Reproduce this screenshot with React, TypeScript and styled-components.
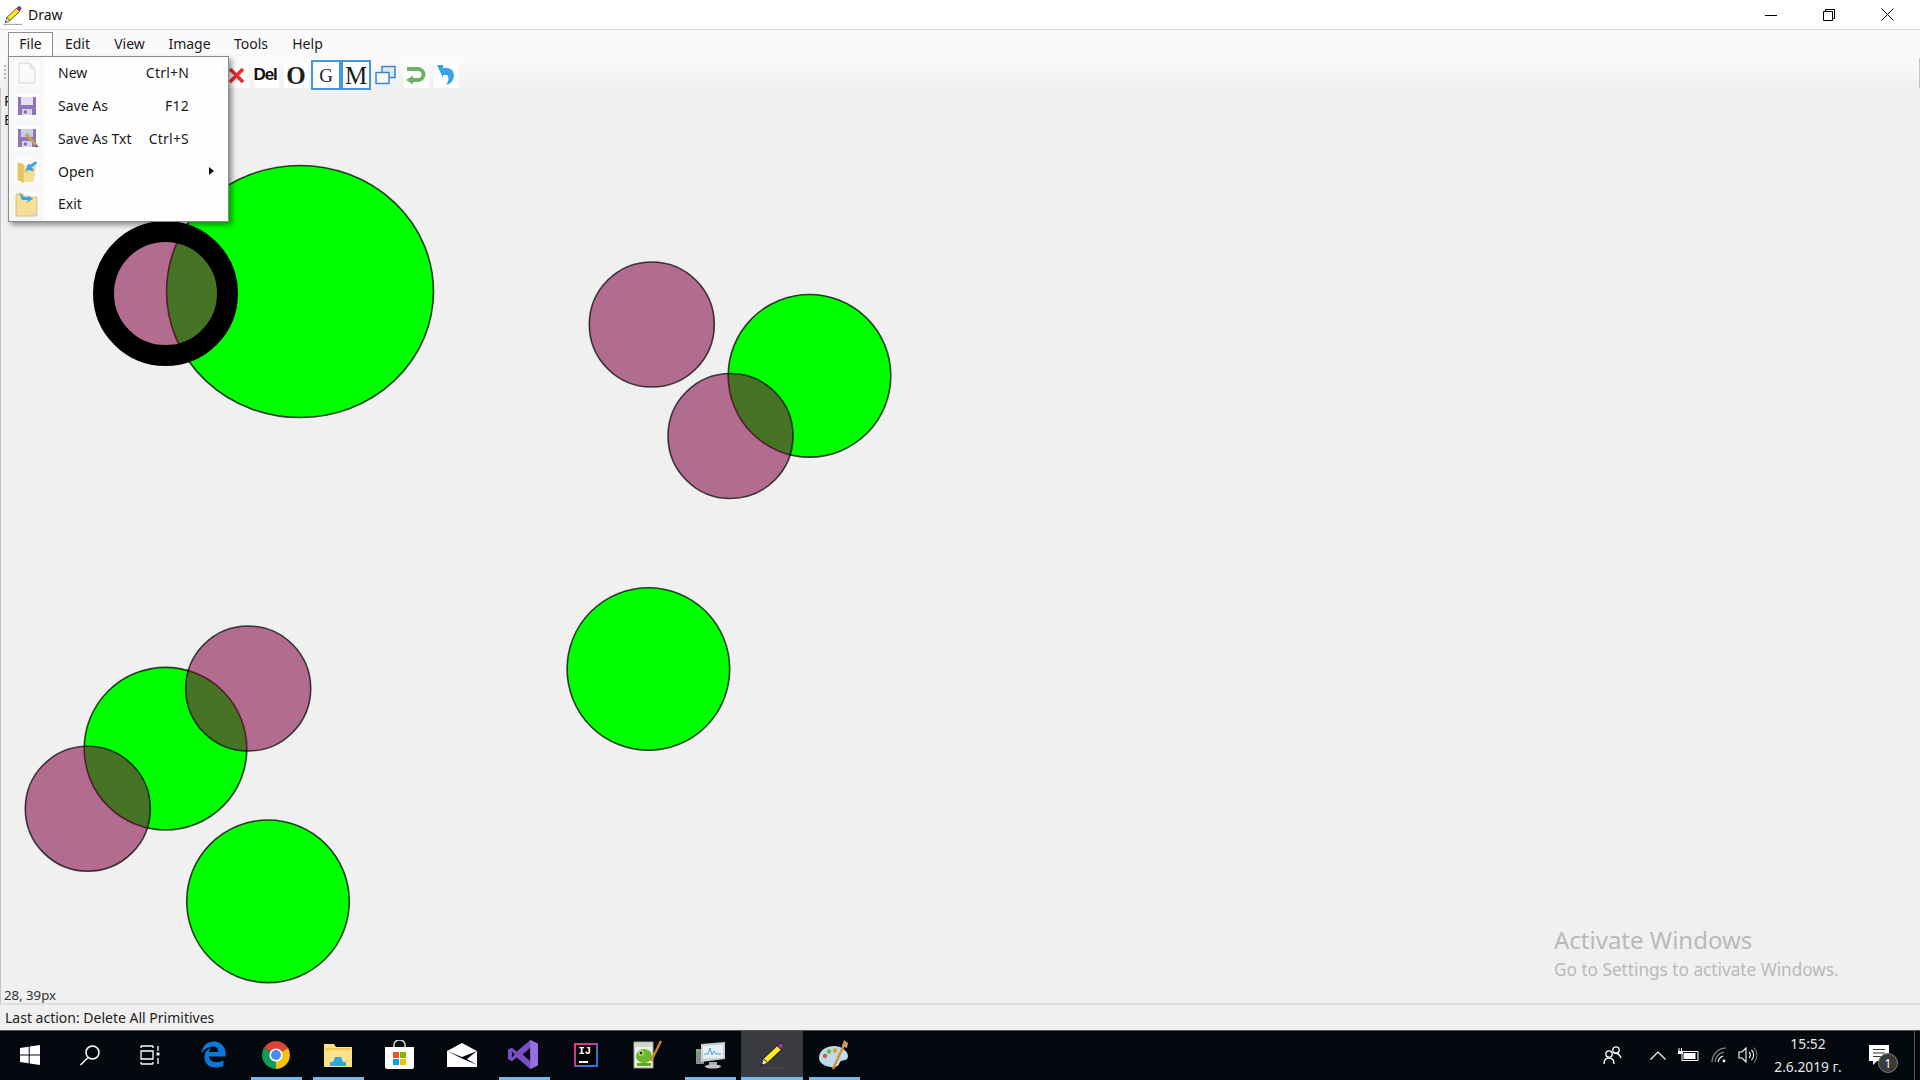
import React from "react";
import styled, { createGlobalStyle } from "styled-components";
import { FaEdgeLegacy } from "react-icons/fa";

const Global = createGlobalStyle`
  html, body { margin: 0; width: 1920px; height: 1080px; overflow: hidden; background: #f0f0f0; }
  body { font-family: "Noto Sans", "Open Sans", sans-serif; color: #1a1a1a; }
  * { box-sizing: border-box; }
`;

const Window = styled.div`display:flex;flex-direction:column;width:1920px;height:1080px;position:relative;`;
const TitleBar = styled.div`height:30px;flex:none;background:#fff;border-bottom:1px solid #dcdcdc;display:flex;align-items:center;padding-left:3px;`;
const TitleText = styled.span`font-size:14px;margin-left:5px;color:#111;`;
const Controls = styled.div`margin-left:auto;display:flex;padding-right:3px;`;
const ControlButton = styled.div`width:58.5px;height:29px;display:flex;align-items:center;justify-content:center;`;

const MenuBar = styled.div`height:28px;flex:none;background:#fafafa;display:flex;padding-left:8px;position:relative;z-index:3;`;
const MenuItem = styled.div<{ $open?: boolean; $w: number }>`
  width:${p => p.$w}px;height:${p => (p.$open ? 25 : 28)}px;margin-top:${p => (p.$open ? 2 : 0)}px;
  display:flex;align-items:center;justify-content:center;font-size:14px;padding-bottom:${p => (p.$open ? 3 : 1)}px;
  ${p => p.$open && "border:1px solid #8f8f8f;border-bottom:0;background:#fdfdfd;"}
`;
const Dropdown = styled.div`
  position:absolute;left:8px;top:26px;width:221px;height:166px;background:#fefefe;border:1px solid #8a8a8a;
  box-shadow:3px 3px 5px rgba(0,0,0,.4);display:grid;grid-auto-rows:32.75px;align-content:start;
  background-image:linear-gradient(to right,#f7f7f7 35px,transparent 35px);
`;
const Row = styled.div`display:flex;align-items:center;font-size:14px;position:relative;padding-bottom:1px;`;
const IconTile = styled.div`width:24px;height:24px;margin-left:6px;background:#fdfdfd;display:flex;align-items:center;justify-content:center;flex:none;`;
const RowLabel = styled.span`margin-left:19px;`;
const Shortcut = styled.span`position:absolute;right:39px;letter-spacing:.2px;`;
const Arrow = styled.span`position:absolute;right:14px;width:0;height:0;border-left:5px solid #111;border-top:4.5px solid transparent;border-bottom:4.5px solid transparent;`;

const Toolbar = styled.div`height:30px;flex:none;background:linear-gradient(#fbfbfb,#f0f0f0);display:flex;padding-left:221px;position:relative;z-index:2;border-right:1px solid #c4c4c4;`;
const Gripper = styled.div`position:absolute;left:3px;top:6px;width:4px;height:16px;background-image:radial-gradient(circle,#b8b8b8 1px,transparent 1.2px);background-size:4px 4px;`;
const ToolButton = styled.div<{ $checked?: boolean }>`
  width:30px;height:30px;margin-top:2px;display:flex;align-items:center;justify-content:center;
  ${p => p.$checked && "border:2px solid #4596e2;background:#fbfdff;"}
`;
const ToolTile = styled.div`width:25px;height:25px;background:#fefefe;display:flex;align-items:center;justify-content:center;`;
const SerifGlyph = styled.span<{ $size: number; $bold?: boolean }>`font-family:"Liberation Serif",serif;font-size:${p => p.$size}px;font-weight:${p => (p.$bold ? 700 : 400)};color:#1d1d1d;line-height:1;`;
const DelGlyph = styled.span`font-family:"Liberation Sans",sans-serif;font-weight:700;font-size:17px;letter-spacing:-1.2px;color:#111;margin-right:2px;`;

const Canvas = styled.div`flex:1;position:relative;background:#f0f0f0;border-left:1px solid #c4c4c4;overflow:hidden;`;
const Drawing = styled.svg`position:absolute;left:-1px;top:0;`;
const SideLabel = styled.span<{ $top: number }>`position:absolute;left:3px;top:${p => p.$top}px;font-size:14px;line-height:19px;`;
const Coords = styled.span`position:absolute;left:3px;bottom:0;font-size:13.2px;line-height:16px;color:#333;`;
const Watermark = styled.div`position:absolute;left:1553px;top:835px;color:#b9b9b9;`;
const WatermarkTitle = styled.div`font-size:24px;line-height:33px;`;
const WatermarkSub = styled.div`font-size:17.2px;line-height:28px;`;

const StatusBar = styled.div`height:27px;flex:none;border-top:2px solid #dfdfdf;background:#f0f0f0;display:flex;align-items:center;padding-left:5px;font-size:14px;color:#222;`;

const Taskbar = styled.div`height:50px;flex:none;background:#05090f;border-top:1px solid #555;display:flex;`;
const QuickButton = styled.div`width:60px;padding-bottom:2px;display:flex;align-items:center;justify-content:center;`;
const QuickGap = styled.div`width:2.5px;flex:none;`;
const AppButton = styled.div<{ $running?: boolean; $active?: boolean }>`
  width:62px;position:relative;padding-bottom:2px;display:flex;align-items:center;justify-content:center;
  ${p => p.$active && "background:#3a3b40;"}
  ${p => p.$running && `&::after{content:"";position:absolute;left:${p.$active ? 0 : 6}px;right:${p.$active ? 0 : 5}px;bottom:0;height:3px;background:#76b9ed;}`}
`;
const Tray = styled.div`margin-left:auto;display:flex;padding-right:5px;`;
const TrayItem = styled.div<{ $w: number }>`width:${p => p.$w}px;display:flex;align-items:center;justify-content:center;position:relative;padding-bottom:1px;`;
const Clock = styled.div`color:#e8e8e8;font-size:13.8px;line-height:23px;text-align:center;white-space:nowrap;`;
const Badge = styled.span`position:absolute;left:23px;top:22px;width:20px;height:20px;border-radius:50%;background:#3a3a3a;border:1px solid #777;color:#fff;font-size:12px;display:flex;align-items:center;justify-content:center;`;
const DesktopEdge = styled.div`width:13px;border-right:1px solid #555;`;

const IntelliJBox = styled.div`width:24px;height:24px;padding:2px;background:linear-gradient(135deg,#ee3a7b,#b5408a 40%,#2b7bdc 75%,#2f6fe0);`;
const IntelliJInner = styled.div`width:100%;height:100%;background:#000;color:#fff;font:700 10.5px "Liberation Mono",monospace;padding:1px 0 0 3px;line-height:10px;position:relative;&::after{content:"";position:absolute;left:3px;bottom:2px;width:9px;height:2px;background:#fff;}`;

const greens = [
  [809.5, 375.8],
  [648.4, 669],
  [165.5, 748.7],
  [268, 901.3],
];
const pinks = [
  [651.8, 324.5],
  [730.5, 436],
  [248.2, 688.5],
  [87.8, 808.7],
];
const PINK = "rgba(128,0,66,.55)";

const Pencil = ({ size }: { size: number }) => (
  <svg width={size} height={size} viewBox="0 0 32 32">
    <path d="M1 31h30" stroke="#555" strokeWidth="1.600" strokeDasharray="1.500 1" />
    <path d="M22 5l5 5L11 25l-5-5z" fill="#ffec1e" stroke="#222" strokeWidth="1.200" />
    <path d="M6 20l5 5-7 3z" fill="#f4ead0" stroke="#333" strokeWidth="1" />
    <path d="M3 29l1.500-3 1.500 1.500z" fill="#111" />
    <circle cx="26" cy="5.500" r="3" fill="#b02cb0" stroke="#222" strokeWidth=".8" />
  </svg>
);
const Sheet = () => (
  <svg width="18" height="22" viewBox="0 0 18 22">
    <path d="M1 1h11l5 5v15H1z" fill="#fafafa" stroke="#d4d4d4" />
    <path d="M12 1v5h5" fill="#eee" stroke="#d4d4d4" />
  </svg>
);
const Floppy = ({ pen }: { pen?: boolean }) => (
  <svg width="22" height="22" viewBox="0 0 22 22">
    <path d="M2 2h18v18H2z" fill="#8f74bd" />
    <path d="M5 2h12v8H5z" fill={pen ? "#c9cfe0" : "#e4e0f0"} />
    <path d="M6 14h10v6H6z" fill="#d8d4e6" />
    <path d="M8 15.500h3v3H8z" fill="#8a70b8" />
    {pen && <path d="M10 7l10 11" stroke="#c8a050" strokeWidth="3" />}
    {pen && <path d="M20 18l1.500 2" stroke="#b23030" strokeWidth="2" />}
  </svg>
);
const FolderOpen = () => (
  <svg width="24" height="25" viewBox="0 0 22 24">
    <path d="M2 3l6 2v18l-6-3z" fill="#e5c25c" />
    <path d="M8 6h12l-3 16H8z" fill="#f4dc90" />
    <path d="M20 3l-8 6 1.500-4M12 9l5 1.500" fill="none" stroke="#35a4ec" strokeWidth="2.600" />
  </svg>
);
const FolderExit = () => (
  <svg width="24" height="26" viewBox="0 0 24 26">
    <path d="M1 3h7l2 3h12v19H1z" fill="#f5df96" stroke="#dcc070" />
    <path d="M4 1l5 5h5l-3-3 7 5-7 4 2-3H7z" fill="#35a4ec" />
    <path d="M18 21h4v3h-4z" fill="#d8d8d8" />
  </svg>
);
const Stacked = () => (
  <svg width="22" height="20" viewBox="0 0 22 20">
    <path d="M7 1.500h13v11H7z" fill="#d9e9f7" stroke="#3d85c6" strokeWidth="1.500" />
    <path d="M1 7.500h13v11H1z" fill="#f6fafd" stroke="#3d85c6" strokeWidth="1.500" />
  </svg>
);
const Undo = () => (
  <svg width="22" height="18" viewBox="0 0 22 18">
    <path d="M2 3h11a5.500 5.500 0 0 1 0 11H5" fill="none" stroke="#6db266" strokeWidth="4" />
    <path d="M8 9.500v9L1 14z" fill="#6db266" />
  </svg>
);
const Redo = () => (
  <svg width="20" height="22" viewBox="0 0 20 22">
    <path d="M1 1h6v3h4a7 7 0 0 1 7 7c0 5-3 9-8 10 3-3 3-9 1-10H7v3z" fill="#36a3e8" />
  </svg>
);

const WinLogo = () => (
  <svg width="20" height="20" viewBox="0 0 20 20" fill="#fff">
    <path d="M0 3l8.700-1.300v7.800H0zM9.700 1.500L20 0v9.500H9.700zM0 10.500h8.700v7.800L0 17zM9.700 10.500H20V20l-10.300-1.500z" />
  </svg>
);
const Search = () => (
  <svg width="22" height="22" viewBox="0 0 22 22" fill="none" stroke="#fff" strokeWidth="1.500">
    <circle cx="13.500" cy="8.500" r="6.500" />
    <path d="M9 13.500L1.500 21" />
  </svg>
);
const TaskView = () => (
  <svg width="20" height="20" viewBox="0 0 20 20" fill="none" stroke="#fff" strokeWidth="1.300">
    <path d="M1 1h12M1 19h12M1 6h12v8H1zM1 1v2M13 1v2M1 17v2M13 17v2M18 1v5M18 13v6" />
    <path d="M16.500 7.500h3v3h-3z" fill="#fff" stroke="none" />
  </svg>
);
const Chrome = () => (
  <svg width="28" height="28" viewBox="0 0 28 28">
    <path d="M14 14L1.900 7A14 14 0 0 1 26.100 7z" fill="#db4437" />
    <path d="M14 14L26.100 7A14 14 0 0 1 14 28z" fill="#f4c20d" />
    <path d="M14 14L14 28A14 14 0 0 1 1.900 7z" fill="#0f9d58" />
    <circle cx="14" cy="14" r="6.600" fill="#fff" />
    <circle cx="14" cy="14" r="5" fill="#4c8bf5" />
  </svg>
);
const Explorer = () => (
  <svg width="28" height="24" viewBox="0 0 28 24">
    <path d="M0 1h10l2 3h16v20H0z" fill="#fbe18a" />
    <path d="M1 5h26v2H1z" fill="#f2c94c" />
    <path d="M6 23v-4h3l2-5h6l2 5h3v4z" fill="#2fa7e6" />
  </svg>
);
const Store = () => (
  <svg width="29" height="29" viewBox="0 0 29 29">
    <path d="M9 8V4.500a5 4 0 0 1 11 0V8" fill="none" stroke="#d8d8d8" strokeWidth="1.500" />
    <path d="M0 7h29v20a2 2 0 0 1-2 2H2a2 2 0 0 1-2-2z" fill="#fff" />
    <path d="M8 12h6v6H8z" fill="#f25022" /><path d="M15 12h6v6h-6z" fill="#7fba00" />
    <path d="M8 19h6v6H8z" fill="#00a4ef" /><path d="M15 19h6v6h-6z" fill="#ffb900" />
  </svg>
);
const Mail = () => (
  <svg width="30" height="24" viewBox="0 0 30 24">
    <path d="M0 8L15 0l15 8v16H0z" fill="#fff" />
    <path d="M0 8l15 6 15-6-10 8 10 6-15-6.500z" fill="#05090f" />
  </svg>
);
const VS = () => (
  <svg width="31" height="31" viewBox="0 0 32 32">
    <path fillRule="evenodd" fill="#7b4fc4" d="M23 1l8 4v22l-8 4L9 19l-5 4-4-2V11l4-2 5 4zM23 9l-8 7 8 7zM4 13v6l3-3z" />
    <path d="M23 1l8 4v22l-8 4z" fill="#9a6ce4" />
  </svg>
);
const Notepad = () => (
  <svg width="30" height="30" viewBox="0 0 30 30">
    <path d="M1 2h19v26H1z" fill="#eef2e6" stroke="#9a9a9a" />
    <path d="M1 3h18v4H1z" fill="#d0d8c8" />
    <ellipse cx="11" cy="16" rx="8" ry="7" fill="#6fb52c" />
    <circle cx="8" cy="13" r="3" fill="#a4d65e" /><circle cx="8" cy="13" r="1.200" fill="#123" />
    <path d="M4 23h14v3H4z" fill="#5fa426" />
    <path d="M28 1L18 21" stroke="#d08a1c" strokeWidth="2.400" />
  </svg>
);
const Monitor = () => (
  <svg width="30" height="28" viewBox="0 0 30 28">
    <path d="M1 8h8v15H1z" fill="#8a8f8e" /><path d="M1 9h3v2H1z" fill="#5ec95e" />
    <path d="M6 3l24-2v17l-24 3z" fill="#c9ced2" />
    <path d="M8 5l20-1.500v13L8 18z" fill="#e8eef2" />
    <path d="M9 13h4l2-6 2 7 2-4 2 3h5" fill="none" stroke="#4aa2e0" strokeWidth="1" />
    <path d="M14 21h8v3h-8z" fill="#aaa" /><ellipse cx="18" cy="25.500" rx="8" ry="2" fill="#c4c4c4" />
  </svg>
);
const Palette = () => (
  <svg width="32" height="32" viewBox="0 0 32 32">
    <path d="M1 19C1 11 9 7 16 7s14 5 14 10-5 4-7 5-1 5-6 6S1 26 1 19z" fill="#bcdcee" />
    <circle cx="7" cy="17" r="2.200" fill="#d85a3a" /><circle cx="11" cy="12.500" r="2.200" fill="#6cb44c" /><circle cx="17" cy="11.500" r="2.200" fill="#e89a3a" />
    <path d="M26 6L15 30" stroke="#e08a2a" strokeWidth="2.400" />
    <path d="M24 7l2-6 4 3-1 5z" fill="#c69a6a" />
  </svg>
);
const People = () => (
  <svg width="20" height="20" viewBox="0 0 20 20" fill="none" stroke="#fff" strokeWidth="1.300">
    <circle cx="13" cy="5" r="3.200" /><circle cx="6" cy="9" r="3.200" />
    <path d="M11 8c4 0 6 2 7 5M1 19c0-4 2-6 5-6s5 2 5 6" />
  </svg>
);
const Battery = () => (
  <svg width="21" height="14" viewBox="0 0 21 14">
    <path d="M1 0v3M3.500 0v3" stroke="#fff" strokeWidth="1" />
    <path d="M0 3h5v3H0z" fill="#fff" />
    <path d="M4 3.500h16v9H4z" fill="none" stroke="#fff" />
    <path d="M5.500 5h12v6h-12z" fill="#fff" />
  </svg>
);
const Wifi = () => (
  <svg width="16" height="16" viewBox="0 0 16 16" fill="none" stroke="#9a9a9a" strokeWidth="1.100">
    <path d="M1 15A14 14 0 0 1 15 1" /><path d="M4 15A11 11 0 0 1 13 5" /><path d="M7 15A8 8 0 0 1 12 9" stroke="#fff" />
    <circle cx="13" cy="14" r="1.400" fill="#fff" stroke="none" />
  </svg>
);
const Volume = () => (
  <svg width="20" height="18" viewBox="0 0 20 18" fill="none" stroke="#fff" strokeWidth="1.100">
    <path d="M1 6h3l4-4v14l-4-4H1z" />
    <path d="M11 6a4 4 0 0 1 0 6M13.500 4a7 7 0 0 1 0 10" /><path d="M16 1.500a11 11 0 0 1 0 15" stroke="#777" />
  </svg>
);
const Note = () => (
  <svg width="20" height="20" viewBox="0 0 20 20">
    <path d="M0 0h20v16H8l-4 4v-4H0z" fill="#fff" />
    <path d="M4 4.500h12M4 8h12M4 11.500h12" stroke="#333" strokeWidth="1.200" />
  </svg>
);

const menu = [
  { label: "File", w: 45, open: true },
  { label: "Edit", w: 49 },
  { label: "View", w: 55 },
  { label: "Image", w: 65 },
  { label: "Tools", w: 58 },
  { label: "Help", w: 55 },
];

const rows = [
  { icon: <Sheet />, label: "New", keys: "Ctrl+N" },
  { icon: <Floppy />, label: "Save As", keys: "F12" },
  { icon: <Floppy pen />, label: "Save As Txt", keys: "Ctrl+S" },
  { icon: <FolderOpen />, label: "Open", arrow: true },
  { icon: <FolderExit />, label: "Exit" },
];

export default function App() {
  return (
    <Window>
      <Global />
      <TitleBar>
        <Pencil size={20} />
        <TitleText>Draw</TitleText>
        <Controls>
          <ControlButton>
            <svg width="12" height="12" viewBox="0 0 12 12"><path d="M0 6.500h12" stroke="#000" /></svg>
          </ControlButton>
          <ControlButton>
            <svg width="12" height="12" viewBox="0 0 12 12" fill="none" stroke="#000"><path d="M.5 2.500h9v9h-9zM2.500 2.500v-2h9v9h-2" /></svg>
          </ControlButton>
          <ControlButton>
            <svg width="13" height="13" viewBox="0 0 13 13" stroke="#000"><path d="M.5.500l12 12M12.500.500l-12 12" /></svg>
          </ControlButton>
        </Controls>
      </TitleBar>

      <MenuBar>
        {menu.map(m => (
          <MenuItem key={m.label} $w={m.w} $open={m.open}>{m.label}</MenuItem>
        ))}
        <Dropdown>
          {rows.map(r => (
            <Row key={r.label}>
              <IconTile>{r.icon}</IconTile>
              <RowLabel>{r.label}</RowLabel>
              {r.keys && <Shortcut>{r.keys}</Shortcut>}
              {r.arrow && <Arrow />}
            </Row>
          ))}
        </Dropdown>
      </MenuBar>

      <Toolbar>
        <Gripper />
        <ToolButton>
          <ToolTile>
            <svg width="17" height="17" viewBox="0 0 17 17"><path d="M2 2l13 13M15 2L2 15" stroke="#ee2b2b" strokeWidth="3.600" /></svg>
          </ToolTile>
        </ToolButton>
        <ToolButton><ToolTile><DelGlyph>Del</DelGlyph></ToolTile></ToolButton>
        <ToolButton><ToolTile><SerifGlyph $size={25} $bold>O</SerifGlyph></ToolTile></ToolButton>
        <ToolButton $checked><SerifGlyph $size={19}>G</SerifGlyph></ToolButton>
        <ToolButton $checked><SerifGlyph $size={25}>M</SerifGlyph></ToolButton>
        <ToolButton><Stacked /></ToolButton>
        <ToolButton><ToolTile><Undo /></ToolTile></ToolButton>
        <ToolButton><ToolTile><Redo /></ToolTile></ToolButton>
      </Toolbar>

      <Canvas>
        <Drawing width="1920" height="915" viewBox="0 88 1920 915">
          <ellipse cx="300" cy="291.500" rx="133.500" ry="126" fill="#00ff00" stroke="rgba(0,0,0,.75)" strokeWidth="1.600" />
          {greens.map(([cx, cy]) => (
            <circle key={cx} cx={cx} cy={cy} r="81.300" fill="#00ff00" stroke="rgba(0,0,0,.75)" strokeWidth="1.600" />
          ))}
          <circle cx="165.500" cy="293.500" r="62" fill={PINK} stroke="#000" strokeWidth="21" />
          {pinks.map(([cx, cy]) => (
            <circle key={cx} cx={cx} cy={cy} r="62.500" fill={PINK} stroke="rgba(0,0,0,.72)" strokeWidth="1.600" />
          ))}
        </Drawing>
        <SideLabel $top={3}>R</SideLabel>
        <SideLabel $top={22}>E</SideLabel>
        <Coords>28, 39px</Coords>
        <Watermark>
          <WatermarkTitle>Activate Windows</WatermarkTitle>
          <WatermarkSub>Go to Settings to activate Windows.</WatermarkSub>
        </Watermark>
      </Canvas>

      <StatusBar>Last action: Delete All Primitives</StatusBar>

      <Taskbar>
        <QuickButton><WinLogo /></QuickButton>
        <QuickButton><Search /></QuickButton>
        <QuickButton><TaskView /></QuickButton>
        <QuickGap />
        <AppButton><FaEdgeLegacy size={27} color="#0a78d7" /></AppButton>
        <AppButton $running><Chrome /></AppButton>
        <AppButton $running><Explorer /></AppButton>
        <AppButton><Store /></AppButton>
        <AppButton><Mail /></AppButton>
        <AppButton $running><VS /></AppButton>
        <AppButton>
          <IntelliJBox><IntelliJInner>IJ</IntelliJInner></IntelliJBox>
        </AppButton>
        <AppButton><Notepad /></AppButton>
        <AppButton $running><Monitor /></AppButton>
        <AppButton $running $active><Pencil size={28} /></AppButton>
        <AppButton $running><Palette /></AppButton>
        <Tray>
          <TrayItem $w={60}><People /></TrayItem>
          <TrayItem $w={30}>
            <svg width="16" height="9" viewBox="0 0 16 9" fill="none" stroke="#fff" strokeWidth="1.200"><path d="M.5 8.500L8 1l7.500 7.500" /></svg>
          </TrayItem>
          <TrayItem $w={30}><Battery /></TrayItem>
          <TrayItem $w={32}><Wifi /></TrayItem>
          <TrayItem $w={26}><Volume /></TrayItem>
          <TrayItem $w={94}>
            <Clock>15:52<br />2.6.2019 г.</Clock>
          </TrayItem>
          <TrayItem $w={47}>
            <Note />
            <Badge>1</Badge>
          </TrayItem>
          <DesktopEdge />
        </Tray>
      </Taskbar>
    </Window>
  );
}
